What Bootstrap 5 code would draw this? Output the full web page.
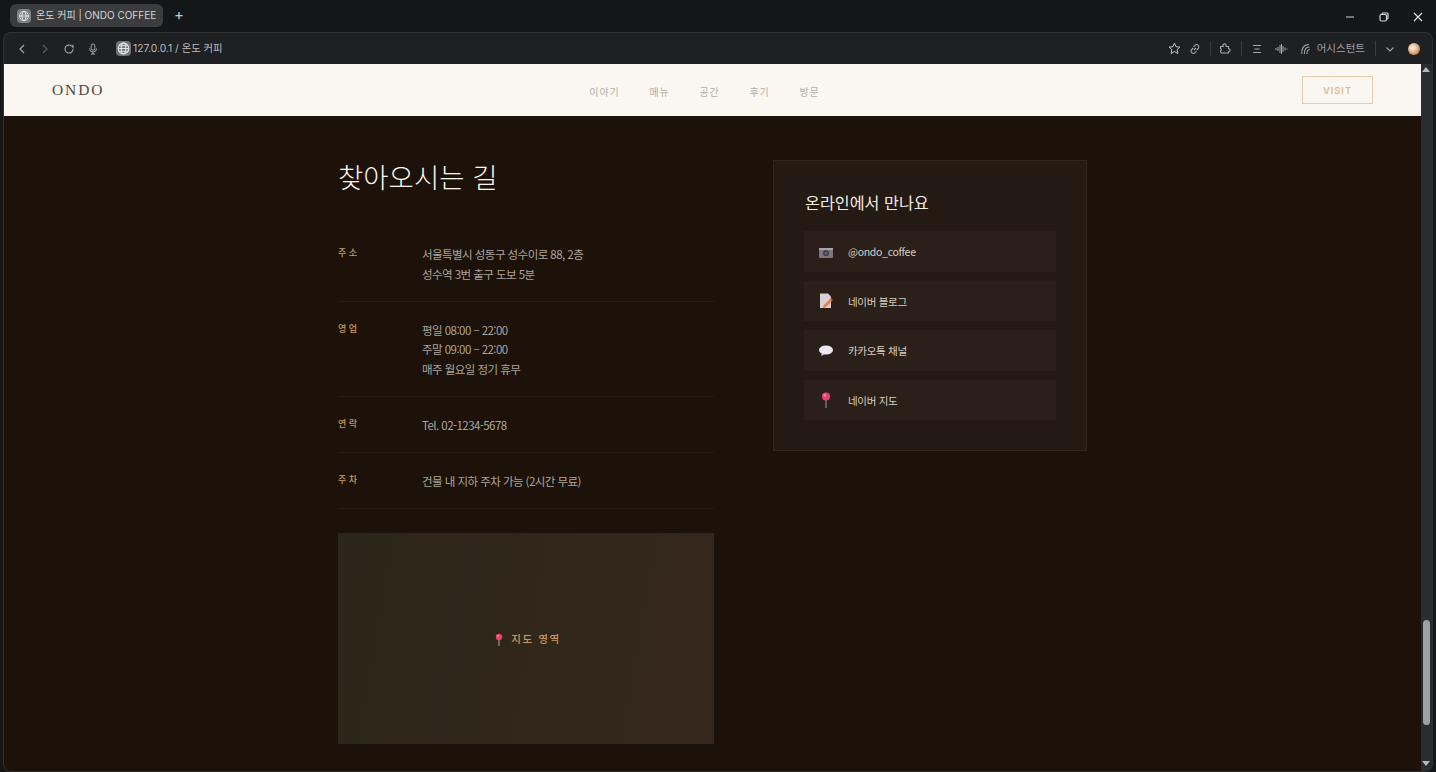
<!DOCTYPE html>
<html lang="ko">
<head>
  <meta charset="UTF-8">
  <title>온도 커피 | ONDO COFFEE</title>
  <link href="https://cdn.jsdelivr.net/npm/bootstrap@5.3.0/dist/css/bootstrap.min.css" rel="stylesheet">
  <style>
    html, body { height: 772px; overflow: hidden; }
    body { background: #151618; font-family: "Inter", "Noto Sans CJK KR", sans-serif; color: #d8d8d8; }
    .tabstrip { height: 32px; padding: 0 3px 0 10px; }
    .browser-tab { width: 153px; height: 23px; background: #3a3c3e; border-radius: 6px; margin-top: 4px; padding-left: 7px; font-size: 10px; color: #d6d6d6; gap: 5px; white-space: nowrap; }
    .globe { width: 14px; height: 14px; border-radius: 4px; background: #7d8287; flex: none; }
    .add-tab { margin: 7px 0 0 11px; font-size: 15px; font-weight: 400; line-height: 1; color: #c8c8c8; }
    .win-btns { gap: 24px; padding-right: 10px; padding-top: 4px; height: 30px; }
    .win-shell { height: 740px; margin: 0 3px; border: 1px solid #303234; border-bottom-color: #2a2b2d; border-radius: 8px; background: #1e2022; overflow: hidden; }
    .toolbar { height: 31px; flex: none; padding: 0 12px 0 12px; color: #9a9c9e; }
    .toolbar svg { flex: none; display: block; }
    .addr { font-size: 10.3px; color: #bdbdbd; gap: 2px; margin-left: 17px; white-space: nowrap; }
    .addr .globe { width: 15px; height: 15px; background: #6d7276; }
    .assist { font-size: 10.5px; color: #a0a2a4; white-space: nowrap; margin-left: 5px; }
    .tool-sep { width: 1px; height: 15px; background: #3a3c3e; margin: 0 8px 0 9px; }
    .sep-wide { margin: 0 9px 0 9px; }
    .sep-end { margin: 0 9px 0 10px; }
    .gap-11 { margin-left: 11px; }
    .gap-12 { margin-left: 12px; }
    .gap-8 { margin-left: 8px; }
    .gap-13 { margin-left: 13px; }
    .avatar { width: 12px; height: 12px; border-radius: 50%; background: radial-gradient(circle at 40% 40%, #f6e3cf 15%, #d69a6c 60%, #8e4f36); }

    .viewport { height: 708px; }
    .site { background: #1c1209; overflow: hidden; }
    .site-nav { height: 52px; flex: none; background: #faf6f1; padding: 0 48px; }
    .logo { font-family: "Liberation Serif", serif; font-size: 15.5px; letter-spacing: 1.9px; color: #51473e; width: 234px; }
    .site-links { gap: 29.6px; font-family: "Noto Sans CJK KR", sans-serif; font-size: 10px; letter-spacing: 1px; color: #b5aea6; padding-top: 2px; }
    .nav-end { width: 250px; }
    .visit-btn { width: 71px; height: 28px; border: 1px solid #e2cda8; color: #d8bd90; font-size: 9.3px; letter-spacing: 1px; font-weight: 600; border-radius: 0; padding: 2px 0 0; background: transparent; }
    .site-main { padding: 44px 0 0 334px; gap: 59px; font-family: "Noto Sans CJK KR", sans-serif; }
    .loc-col { width: 376px; flex: none; }
    .loc-title { font-size: 27.5px; font-weight: 300; color: #faf6f1; line-height: 32px; margin: 0 0 37px; }
    .info-row { border-bottom: 1px solid #261c14; padding: 19px 0 16.5px; }
    .info-row:first-of-type { padding-top: 16px; }
    .info-label { width: 84px; flex: none; font-size: 9px; letter-spacing: 0; color: #c99a5b; font-weight: 500; line-height: 15px; }
    .info-val { font-size: 11.5px; line-height: 19.5px; color: #ada59d; letter-spacing: -.55px; }
    .map-box { height: 211px; margin-top: 24px; background: linear-gradient(100deg, #2b2619, #36271c); color: #c99a5b; font-size: 10.5px; letter-spacing: 1.6px; gap: 7px; font-weight: 500; padding: 2px 0 0 3px; }
    .online-card { width: 314px; height: 291px; flex: none; background: #241a14; border: 1px solid #31271c; border-radius: 0; padding: 30px 30px 0 30px; }
    .online-card h3 { font-size: 16.2px; font-weight: 400; line-height: 22px; color: #f3ece2; margin: 0 0 18px 1px; }
    .sns-item { height: 40.5px; background: #2a1f19; margin-bottom: 9px; padding-left: 15px; gap: 15px; font-size: 10.5px; letter-spacing: -.3px; color: #d8cfc4; text-decoration: none; }
    .sns-item span { padding-top: 2px; }
    .sns-item svg { flex: none; width: 14px; height: 16px; }

    .scroll-rail { width: 11px; flex: none; background: #2b2c2e; padding: 0 1px; }
    .scroll-thumb { width: 7px; height: 105px; margin-left: 1px; margin-top: 548px; background: #a0a0a0; border-radius: 4px; }
    .arrow-up { width: 0; height: 0; border: 4px solid transparent; border-top: 0; border-bottom: 5px solid #b8b8b8; margin: 3px 0 0 0; }
    .arrow-down { width: 0; height: 0; border: 4px solid transparent; border-bottom: 0; border-top: 5px solid #b8b8b8; margin: 36px 0 0 0; }
  </style>
</head>
<body>

<div class="tabstrip d-flex align-items-start">
  <div class="browser-tab d-flex align-items-center">
    <svg class="globe" viewBox="0 0 14 14" fill="none" stroke="#e4e4e4" stroke-width="1"><circle cx="7" cy="7" r="4.5"/><ellipse cx="7" cy="7" rx="2" ry="4.5"/><path d="M2.5 7h9"/></svg>
    <span>온도 커피 | ONDO COFFEE</span>
  </div>
  <div class="add-tab">+</div>
  <div class="win-btns d-flex ms-auto align-items-center">
    <svg width="10" height="10" viewBox="0 0 10 10" stroke="#d8d8d8" fill="none"><path d="M1 5h8"/></svg>
    <svg width="10" height="10" viewBox="0 0 10 10" stroke="#d8d8d8" fill="none" stroke-width="1.2"><rect x="1" y="2.5" width="6.5" height="6.5" rx="1.5"/><path d="M3 2.5V2a1 1 0 0 1 1-1h4a1 1 0 0 1 1 1v4a1 1 0 0 1-1 1h-.5"/></svg>
    <svg width="10" height="10" viewBox="0 0 10 10" stroke="#e0e0e0" fill="none" stroke-width="1.2"><path d="M1 1l8 8M9 1l-8 8"/></svg>
  </div>
</div>

<div class="win-shell d-flex flex-column">
  <div class="toolbar d-flex align-items-center">
    <svg width="12" height="12" viewBox="0 0 12 12" fill="none" stroke="#a4a6a8" stroke-width="1.2"><path d="M8 2L4 6l4 4"/></svg>
    <svg class="gap-11" width="12" height="12" viewBox="0 0 12 12" fill="none" stroke="#5c5e60" stroke-width="1.2"><path d="M4 2l4 4-4 4"/></svg>
    <svg class="gap-12" width="12" height="12" viewBox="0 0 12 12" fill="none" stroke="#a4a6a8" stroke-width="1.1"><path d="M10 6a4 4 0 1 1-1.2-2.8L10 4.4V1.8"/></svg>
    <svg class="gap-12" width="12" height="12" viewBox="0 0 12 12" fill="none" stroke="#a4a6a8" stroke-width="1"><rect x="4.2" y="1" width="3.6" height="6.2" rx="1.8"/><path d="M2.5 5.5a3.5 3.5 0 0 0 7 0M6 9v2M4 11h4"/></svg>
    <div class="addr d-flex align-items-center">
      <svg class="globe" viewBox="0 0 14 14" fill="none" stroke="#e4e4e4" stroke-width="1"><circle cx="7" cy="7" r="5"/><ellipse cx="7" cy="7" rx="2.2" ry="5"/><path d="M2 7h10M2.8 4.5h8.4M2.8 9.5h8.4"/></svg>
      <span>127.0.0.1 / 온도 커피</span>
    </div>
    <div class="ms-auto d-flex align-items-center">
      <svg width="13" height="13" viewBox="0 0 13 13" fill="none" stroke="#c4c6c8" stroke-width="1"><path d="M6.5 1.2l1.6 3.5 3.8.4-2.8 2.6.8 3.8-3.4-2-3.400 2 .8-3.800L1.100 5.100l3.800-.4z"/></svg>
      <svg class="gap-8" width="12" height="12" viewBox="0 0 12 12" fill="none" stroke="#a4a6a8" stroke-width="1.1"><path d="M5 7l2-2M4.500 3.800L6 2.300a2.200 2.200 0 0 1 3.200 3.200L7.700 7M7.500 8.200L6 9.700a2.200 2.200 0 0 1-3.200-3.200L4.300 5"/></svg>
      <div class="tool-sep"></div>
      <svg width="13" height="13" viewBox="0 0 13 13" fill="none" stroke="#a4a6a8" stroke-width="1.1"><path d="M1.500 6.500V4.500h2.700a1.500 1.500 0 0 1 2.600-1.800 1.500 1.500 0 0 1 .4 1.800h2.300v2.300a1.400 1.400 0 0 1 .9 2.600 1.400 1.400 0 0 1-.9.200v1.400H3.200a1.700 1.700 0 0 1-1.700-1.700V8.800a1.200 1.200 0 0 0 0-2.300z"/></svg>
      <div class="tool-sep sep-wide"></div>
      <svg width="12" height="12" viewBox="0 0 12 12" fill="none" stroke="#a4a6a8" stroke-width="1.1"><path d="M2 2.500h8M3.500 6h5M2 9.500h8"/></svg>
      <svg class="gap-12" width="13" height="12" viewBox="0 0 13 12" fill="none" stroke="#a4a6a8" stroke-width="1"><path d="M1 5v2M3 4v4M5 2v8M6.500 1v10M8 3v6M10 4.500v3M12 5.500v1"/></svg>
      <svg class="gap-12" width="12" height="12" viewBox="0 0 12 12" fill="none" stroke="#a4a6a8" stroke-width="1.1"><path d="M2 11C1 6 3.500 1.500 9 1.500M4.500 11C3.800 7.500 5.500 4 9.500 4M7 11c-.3-2.500.7-4.500 3-4.500"/></svg>
      <span class="assist">어시스턴트</span>
      <div class="tool-sep sep-end"></div>
      <svg width="10" height="10" viewBox="0 0 10 10" fill="none" stroke="#a4a6a8" stroke-width="1.1"><path d="M1.500 3.500L5 7l3.500-3.500"/></svg>
      <div class="avatar gap-13"></div>
    </div>
  </div>

  <div class="viewport d-flex">
    <div class="site flex-grow-1 d-flex flex-column">
      <nav class="site-nav d-flex align-items-center justify-content-between">
        <div class="logo">ONDO</div>
        <div class="site-links d-flex"><span>이야기</span><span>메뉴</span><span>공간</span><span>후기</span><span>방문</span></div>
        <div class="nav-end d-flex justify-content-end"><button class="btn visit-btn">VISIT</button></div>
      </nav>
      <main class="site-main d-flex align-items-start">
        <section class="loc-col">
          <h2 class="loc-title">찾아오시는 길</h2>
          <div class="info-row d-flex"><div class="info-label">주 소</div><div class="info-val">서울특별시 성동구 성수이로 88, 2층<br>성수역 3번 출구 도보 5분</div></div>
          <div class="info-row d-flex"><div class="info-label">영 업</div><div class="info-val">평일 08:00 – 22:00<br>주말 09:00 – 22:00<br>매주 월요일 정기 휴무</div></div>
          <div class="info-row d-flex"><div class="info-label">연 락</div><div class="info-val">Tel. 02-1234-5678</div></div>
          <div class="info-row d-flex"><div class="info-label">주 차</div><div class="info-val">건물 내 지하 주차 가능 (2시간 무료)</div></div>
          <div class="map-box d-flex align-items-center justify-content-center">
            <svg width="10" height="13" viewBox="0 0 10 13"><path d="M5 6v7" stroke="#b0a8a0" stroke-width="1"/><circle cx="5" cy="4" r="3.200" fill="#e8406e"/><circle cx="4" cy="3" r="1" fill="#f58aa6"/></svg>
            <span>지도 영역</span>
          </div>
        </section>
        <aside class="online-card">
          <h3>온라인에서 만나요</h3>
          <a class="sns-item d-flex align-items-center" href="#">
            <svg viewBox="0 0 14 16"><rect x="0" y="5" width="14" height="10" rx="1" fill="#7d7680"/><rect x="0" y="5" width="14" height="2" fill="#a8a2aa"/><circle cx="7" cy="10.300" r="3" fill="#3f3a44"/><circle cx="7" cy="10.300" r="1.500" fill="#6a6470"/></svg>
            <span>@ondo_coffee</span>
          </a>
          <a class="sns-item d-flex align-items-center" href="#">
            <svg viewBox="0 0 14 16"><path d="M1 .5h8l3 3V15H1z" fill="#d8d0d4"/><path d="M4.500 12.500l6.500-6.500 2 2-6.500 6.500-2.500.5z" fill="#ef7f3f"/><path d="M11 6l1-1 2 2-1 1z" fill="#e04a5a"/></svg>
            <span>네이버 블로그</span>
          </a>
          <a class="sns-item d-flex align-items-center" href="#">
            <svg viewBox="0 0 14 16"><ellipse cx="7" cy="8" rx="7" ry="4.500" fill="#eee8f6"/><path d="M3 11l-1 3 4-2z" fill="#d6cfe6"/></svg>
            <span>카카오톡 채널</span>
          </a>
          <a class="sns-item d-flex align-items-center" href="#">
            <svg viewBox="0 0 14 16"><path d="M7 7v9" stroke="#a09890" stroke-width="1"/><circle cx="7" cy="4.500" r="4" fill="#e8406e"/><circle cx="5.700" cy="3.200" r="1.200" fill="#f58aa6"/></svg>
            <span>네이버 지도</span>
          </a>
        </aside>
      </main>
    </div>
    <div class="scroll-rail">
      <div class="arrow-up"></div>
      <div class="scroll-thumb"></div>
      <div class="arrow-down"></div>
    </div>
  </div>
</div>

<script src="https://cdn.jsdelivr.net/npm/bootstrap@5.3.0/dist/js/bootstrap.bundle.min.js"></script>
</body>
</html>
